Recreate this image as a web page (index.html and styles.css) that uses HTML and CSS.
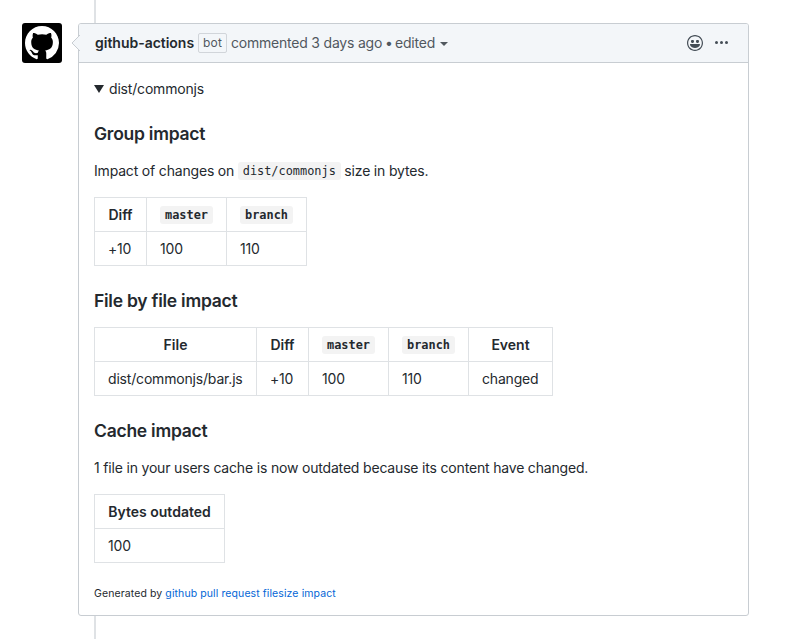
FILE: index.html
```html
<!DOCTYPE html>
<html lang="en">
<head>
<meta charset="utf-8">
<title>Size impact comment</title>
<link rel="stylesheet" href="styles.css">
</head>
<body>
<main class="timeline">
  <div class="avatar">
    <svg width="34" height="34" viewBox="0 0 16 16"><path fill="#fff" d="M8 0C3.58 0 0 3.58 0 8c0 3.54 2.29 6.53 5.47 7.59.4.07.55-.17.55-.38 0-.19-.01-.82-.01-1.49-2.01.37-2.53-.49-2.69-.94-.09-.23-.48-.94-.82-1.13-.28-.15-.68-.52-.01-.53.63-.01 1.08.58 1.23.82.72 1.21 1.87.87 2.33.66.07-.52.28-.87.51-1.07-1.78-.2-3.64-.89-3.64-3.95 0-.87.31-1.59.82-2.15-.08-.2-.36-1.02.08-2.12 0 0 .67-.21 2.2.82.64-.18 1.32-.27 2-.27s1.36.09 2 .27c1.53-1.04 2.2-.82 2.2-.82.44 1.1.16 1.92.08 2.12.51.56.82 1.27.82 2.15 0 3.07-1.87 3.75-3.65 3.95.29.25.54.73.54 1.48 0 1.07-.01 1.93-.01 2.2 0 .21.15.46.55.38A8.01 8.01 0 0 0 16 8c0-4.42-3.58-8-8-8z"/></svg>
  </div>
  <article class="comment">
    <svg class="pointer" width="9" height="16" viewBox="0 0 9 16"><path d="M9 0 1 8l8 8"/></svg>
    <header class="comment-header">
      <strong class="author">github-actions</strong>
      <span class="label">bot</span>
      <span class="meta">commented 3 days ago</span>
      <span class="dot">•</span>
      <span class="edited">edited</span>
      <span class="caret"></span>
      <span class="actions">
        <svg width="16" height="16" viewBox="0 0 16 16"><path fill="#444d56" fill-rule="evenodd" d="M8 0C3.58 0 0 3.58 0 8s3.58 8 8 8 8-3.58 8-8-3.58-8-8-8zm4.81 12.81a6.72 6.72 0 0 1-2.17 1.45c-.83.36-1.72.53-2.64.53-.92 0-1.81-.17-2.64-.53-.81-.34-1.55-.83-2.17-1.45a6.773 6.773 0 0 1-1.45-2.17A6.59 6.59 0 0 1 1.21 8c0-.92.17-1.81.53-2.64.34-.81.83-1.55 1.45-2.17.62-.62 1.36-1.11 2.17-1.45A6.59 6.59 0 0 1 8 1.21c.92 0 1.81.17 2.64.53.81.34 1.55.83 2.17 1.45.62.62 1.11 1.36 1.45 2.17.36.83.53 1.72.53 2.64 0 .92-.17 1.81-.53 2.64-.34.81-.83 1.55-1.45 2.17zM4 6.8v-.59c0-.66.53-1.19 1.2-1.19h.59c.66 0 1.19.53 1.19 1.19v.59c0 .67-.53 1.2-1.19 1.2H5.2C4.53 8 4 7.47 4 6.8zm5 0v-.59c0-.66.53-1.19 1.2-1.19h.59c.66 0 1.19.53 1.19 1.19v.59c0 .67-.53 1.2-1.19 1.2h-.59C9.53 8 9 7.47 9 6.8zm4 3.2c-.72 1.88-2.91 3-5 3s-4.28-1.13-5-3c-.14-.39.23-1 .66-1h8.59c.41 0 .89.61.75 1z"/></svg>
        <svg class="kebab" width="13" height="16" viewBox="0 0 13 16"><path fill="#444d56" d="M1.5 9a1.5 1.5 0 1 0 0-3 1.5 1.5 0 0 0 0 3zm5 0a1.5 1.5 0 1 0 0-3 1.5 1.5 0 0 0 0 3zM13 7.5a1.5 1.5 0 1 1-3 0 1.5 1.5 0 0 1 3 0z"/></svg>
      </span>
    </header>
    <div class="comment-body">
      <div class="summary"><span class="triangle"></span><span>dist/commonjs</span></div>
      <h3>Group impact</h3>
      <p>Impact of changes on <code>dist/commonjs</code> size in bytes.</p>
      <table>
        <colgroup><col class="w52"><col class="w80"><col class="w80"></colgroup>
        <tr><th>Diff</th><th><code>master</code></th><th><code>branch</code></th></tr>
        <tr><td>+10</td><td>100</td><td>110</td></tr>
      </table>
      <h3>File by file impact</h3>
      <table>
        <colgroup><col class="w162"><col class="w52"><col class="w80"><col class="w80"><col class="w84"></colgroup>
        <tr><th>File</th><th>Diff</th><th><code>master</code></th><th><code>branch</code></th><th>Event</th></tr>
        <tr><td>dist/commonjs/bar.js</td><td>+10</td><td>100</td><td>110</td><td>changed</td></tr>
      </table>
      <h3>Cache impact</h3>
      <p>1 file in your users cache is now outdated because its content have changed.</p>
      <table>
        <colgroup><col class="w130"></colgroup>
        <tr><th>Bytes outdated</th></tr>
        <tr><td>100</td></tr>
      </table>
      <div class="generated">Generated by <a>github pull request filesize impact</a></div>
    </div>
  </article>
</main>
</body>
</html>
```
FILE: styles.css
```css
* { box-sizing: border-box; }
body {
  margin: 0;
  background: #fff;
  color: #24292e;
  font: 14px/21px Inter, "Liberation Sans", sans-serif;
  letter-spacing: -0.18px;
}
.timeline {
  display: flex;
  align-items: flex-start;
  height: 639px;
  padding: 23px 46px 0 22px;
  background: linear-gradient(#dfe2e5, #dfe2e5) 94px 0 / 2px 100% no-repeat;
}
.avatar {
  display: flex;
  align-items: center;
  justify-content: center;
  width: 40px;
  height: 40px;
  margin-right: 16px;
  border-radius: 3px;
  background: #000;
}
.comment {
  position: relative;
  flex: 1;
  height: 593px;
  border: 1px solid #c8cdd2;
  border-radius: 3px;
  background: #fff;
}
.pointer { position: absolute; left: -8px; top: 11px; }
.pointer path { fill: #f3f6f9; stroke: #c8cdd2; }
.comment-header {
  display: flex;
  align-items: center;
  height: 39px;
  padding: 0 20px 1px 16px;
  border-bottom: 1px solid #c8cdd2;
  border-radius: 2px 2px 0 0;
  background: #f3f6f9;
  color: #51585f;
}
.author { color: #24292e; font-weight: 600; width: 103px; white-space: nowrap; letter-spacing: -0.02px; }
.label {
  width: 29px;
  height: 20px;
  margin-top: 1px;
  border: 1px solid #d1d5da;
  border-radius: 2px;
  font-size: 12px;
  line-height: 18px;
  text-align: center;
  letter-spacing: 0.2px;
}
.meta { width: 154px; margin-left: 4px; white-space: nowrap; letter-spacing: -0.21px; }
.dot { width: 10px; }
.edited { width: 45px; }
.caret { border: 4px solid transparent; border-top-color: #51585f; border-bottom: 0; margin-top: 3px; }
.actions { display: flex; align-items: center; gap: 12px; margin: 1px 0 0 auto; }
.comment-body { padding: 15px; }
.summary { display: flex; align-items: center; }
.triangle {
  border: 5px solid transparent;
  border-top: 8px solid #24292e;
  border-bottom: 0;
  margin-right: 5px;
}
h3 { margin: 24px 0 15px; font-size: 17.5px; line-height: 22px; font-weight: 600; letter-spacing: -0.25px; }
p { margin: 0 0 16px; }
code {
  padding: 2.4px 4.8px;
  border-radius: 3px;
  background: #f3f3f3;
  font: 11.9px/14px "DejaVu Sans Mono", monospace;
  letter-spacing: 0;
  vertical-align: 1px;
}
th code { font-weight: 700; }
table { border-collapse: collapse; table-layout: fixed; width: 0; }
.w52 { width: 52px; }
.w80 { width: 80px; }
.w84 { width: 84px; }
.w130 { width: 130px; }
.w162 { width: 162px; }
tr { height: 34px; }
th, td { padding: 0 13px; border: 1px solid #dfe2e5; text-align: left; white-space: nowrap; }
th { font-weight: 600; text-align: center; letter-spacing: 0; }
.generated { margin-top: 20px; font-size: 10.5px; letter-spacing: 0.1px; }
.generated a { color: #0366d6; }
```
